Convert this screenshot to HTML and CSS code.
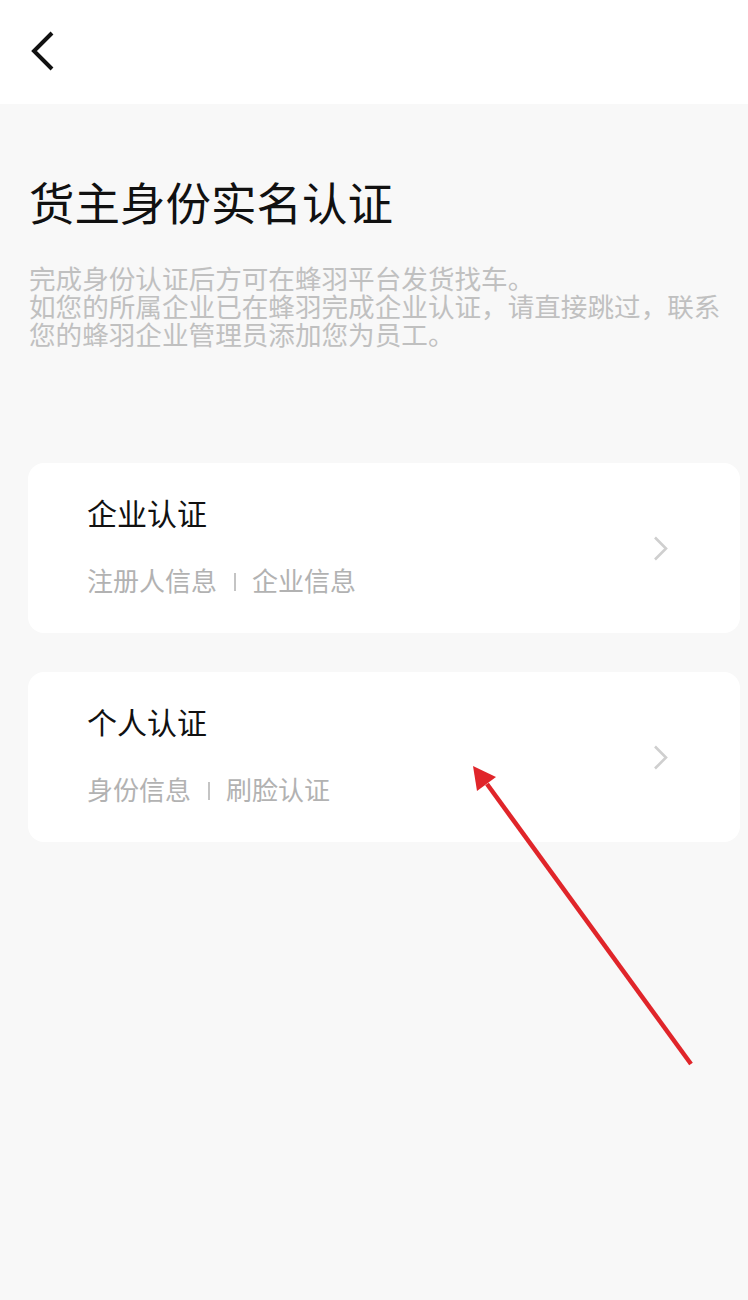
FILE: index.html
```html
<!DOCTYPE html>
<html lang="zh-CN">
<head>
<meta charset="utf-8">
<title>货主身份实名认证</title>
<link rel="stylesheet" href="styles.css">
</head>
<body>
<div class="page">
  <header class="topbar">
    <svg class="back" width="26" height="42" viewBox="0 0 26 42" aria-hidden="true">
      <polyline points="22,3 4,21 22,39" fill="none" stroke="#111" stroke-width="4" stroke-linejoin="miter"/>
    </svg>
  </header>
  <main class="content">
    <h1 class="title">货主身份实名认证</h1>
    <p class="desc">完成身份认证后方可在蜂羽平台发货找车。<br>如您的所属企业已在蜂羽完成企业认证，请直接跳过，联系您的蜂羽企业管理员添加您为员工。</p>
    <div class="cards">
      <div class="card">
        <div class="card-text">
          <div class="card-title">企业认证</div>
          <div class="card-sub">注册人信息<span class="sep"></span>企业信息</div>
        </div>
        <svg class="chev" width="16" height="25" viewBox="0 0 16 25" aria-hidden="true">
          <polyline points="2,1.5 13,12.5 2,23.5" fill="none" stroke="#cfcfcf" stroke-width="2.6"/>
        </svg>
      </div>
      <div class="card">
        <div class="card-text">
          <div class="card-title">个人认证</div>
          <div class="card-sub">身份信息<span class="sep"></span>刷脸认证</div>
        </div>
        <svg class="chev" width="16" height="25" viewBox="0 0 16 25" aria-hidden="true">
          <polyline points="2,1.5 13,12.5 2,23.5" fill="none" stroke="#cfcfcf" stroke-width="2.6"/>
        </svg>
      </div>
    </div>
  </main>
  <svg class="annot" width="748" height="1300" viewBox="0 0 748 1300" aria-hidden="true">
    <line x1="691" y1="1064" x2="487" y2="784" stroke="#e0252a" stroke-width="4.5"/>
    <polygon points="473,766 496,777 477,791" fill="#e0252a"/>
  </svg>
</div>
</body>
</html>
```
FILE: styles.css
```css
html, body {
  margin: 0;
  padding: 0;
}
body {
  background: #f8f8f8;
  font-family: "Noto Sans CJK SC", "Noto Sans", sans-serif;
  color: #111;
}
.page {
  position: relative;
  width: 748px;
  min-height: 1300px;
  overflow: hidden;
}
.topbar {
  height: 104px;
  background: #fff;
  display: flex;
  align-items: flex-start;
  padding: 30px 0 0 30px;
  box-sizing: border-box;
}
.back {
  display: block;
}
.content {
  padding: 0 8px 0 29px;
}
.title {
  margin: 75px 0 0 0;
  font-size: 45.5px;
  line-height: 45px;
  font-weight: 400;
  color: #111;
}
.desc {
  margin: 40px 0 0 0;
  max-width: 705px;
  font-size: 26.6px;
  line-height: 28px;
  color: #c0c0c0;
}
.cards {
  margin: 115px 0 0 -1px;
  display: flex;
  flex-direction: column;
  gap: 39px;
}
.card {
  background: #fff;
  border-radius: 16px;
  height: 170px;
  box-sizing: border-box;
  padding: 34px 71px 0 59px;
  display: flex;
  align-items: center;
}
.card-text {
  flex: 1;
  align-self: flex-start;
}
.card-title {
  font-size: 30px;
  line-height: 30px;
  color: #111;
}
.card-sub {
  margin-top: 40px;
  font-size: 26px;
  line-height: 26px;
  color: #b2b2b2;
  display: flex;
  align-items: flex-end;
}
.sep {
  display: inline-block;
  width: 2px;
  height: 18px;
  background: #c4c4c4;
  margin: 0 16px 2px 17px;
}
.chev {
  display: block;
  margin-top: -34px;
}
.annot {
  position: absolute;
  left: 0;
  top: 0;
  pointer-events: none;
}
```
